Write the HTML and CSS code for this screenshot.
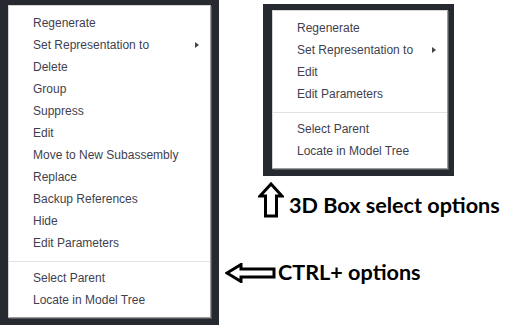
FILE: index.html
```html
<!DOCTYPE html>
<html lang="en">
<head>
  <meta charset="UTF-8">
  <meta name="viewport" content="width=device-width, initial-scale=1.0">
  <title>Context menu options</title>
  <link rel="stylesheet" href="styles.css">
</head>
<body>
  <main class="page">
    <div class="shot shot-big">
      <ul class="menu menu-big">
        <li>Regenerate</li>
        <li class="has-sub">Set Representation to <span class="caret"></span></li>
        <li>Delete</li>
        <li>Group</li>
        <li>Suppress</li>
        <li>Edit</li>
        <li>Move to New Subassembly</li>
        <li>Replace</li>
        <li>Backup References</li>
        <li>Hide</li>
        <li>Edit Parameters</li>
        <li class="sep"></li>
        <li>Select Parent</li>
        <li>Locate in Model Tree</li>
      </ul>
    </div>

    <div class="side">
      <div class="shot shot-small">
        <ul class="menu menu-small">
          <li>Regenerate</li>
          <li class="has-sub">Set Representation to <span class="caret"></span></li>
          <li>Edit</li>
          <li>Edit Parameters</li>
          <li class="sep"></li>
          <li>Select Parent</li>
          <li>Locate in Model Tree</li>
        </ul>
      </div>

      <div class="note note-up">
        <svg class="arrow-up" width="26" height="36" viewBox="0 0 26 36">
          <path d="M13 2 L24 14 L18.5 14 L18.5 34 L7.5 34 L7.5 14 L2 14 Z" fill="#fff" stroke="#000" stroke-width="3" stroke-linejoin="miter"/>
        </svg>
        <span>3D Box select options</span>
      </div>

      <div class="note note-left">
        <svg class="arrow-left" width="51" height="20" viewBox="0 0 51 20">
          <path d="M2 10 L16 1.5 L16 6 L49 6 L49 14 L16 14 L16 18.5 Z" fill="#fff" stroke="#000" stroke-width="3" stroke-linejoin="miter"/>
        </svg>
        <span>CTRL+ options</span>
      </div>
    </div>
  </main>
</body>
</html>
```

FILE: styles.css
```css
:root {
  --clr-frame: #26292f;
  --clr-menu-text: #3f3f4f;
  --clr-sep: #e2e2e2;
}

* {
  padding: 0;
  margin: 0;
  box-sizing: border-box;
}

body {
  background-color: #fff;
  font-family: 'Liberation Sans', Arial, sans-serif;
}

.page {
  display: flex;
  align-items: flex-start;
}

.shot {
  background-color: var(--clr-frame);
}

.shot-big {
  width: 219px;
  height: 325px;
  padding: 5px 8px 7px 8px;
}

.side {
  display: flex;
  flex-direction: column;
  align-items: flex-start;
}

.shot-small {
  width: 191px;
  height: 172px;
  margin: 4px 0 0 44px;
  padding: 6px 6px 7px 9px;
}

.menu {
  list-style: none;
  background-color: #fff;
  border: 1px solid #d4d4d4;
  border-right-color: #9a9a9a;
  border-bottom-color: #9a9a9a;
  box-shadow: 1px 1px 0 #55585e;
  padding: 6px 0 6px;
}

.menu-big {
  width: 203px;
}

.menu-small {
  width: 176px;
}

.menu li {
  height: 22px;
  line-height: 22px;
  font-size: 12px;
  color: var(--clr-menu-text);
  padding-left: 24px;
  position: relative;
}

.menu li.sep {
  height: 1px;
  background-color: var(--clr-sep);
  margin: 7px 0 5px;
}

.caret {
  position: absolute;
  top: 8px;
  right: 11px;
  width: 0;
  height: 0;
  border-top: 3.5px solid transparent;
  border-bottom: 3.5px solid transparent;
  border-left: 4px solid #444;
}

.note {
  display: flex;
  align-items: flex-end;
  font-family: Lato, 'Open Sans', sans-serif;
  font-weight: 700;
  font-size: 21.6px;
  color: #000;
}

.note-up {
  margin: 6px 0 0 39px;
  gap: 5px;
}

.note-up span {
  line-height: 1;
  margin-bottom: 1px;
}

.note-left {
  margin: 44px 0 0 6px;
  align-items: center;
  gap: 2px;
}

.note-left span {
  line-height: 1;
}
```
